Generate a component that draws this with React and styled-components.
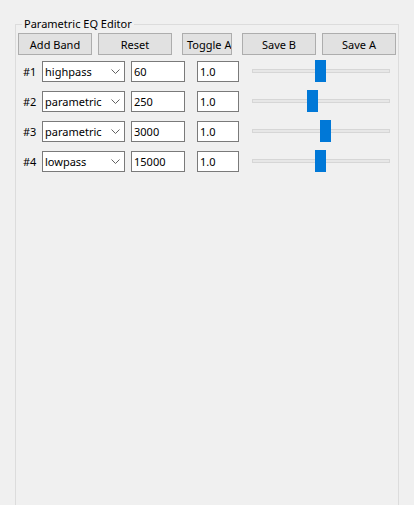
import React from 'react';
import styled, { createGlobalStyle } from 'styled-components';

const bands = [
  { id: 1, type: 'highpass', freq: '60', q: '1.0', thumb: 63 / 127 },
  { id: 2, type: 'parametric', freq: '250', q: '1.0', thumb: 55 / 127 },
  { id: 3, type: 'parametric', freq: '3000', q: '1.0', thumb: 68 / 127 },
  { id: 4, type: 'lowpass', freq: '15000', q: '1.0', thumb: 63 / 127 },
];

const TRACK_W = 138;
const THUMB_W = 11;

const App = () => {
  return (
    <>
      <GlobalStyle />
      <Page>
        <Group>
          <Legend>Parametric EQ Editor</Legend>
          <Toolbar>
            <Button $w={74}>Add Band</Button>
            <Button $w={74} $ml={6}>Reset</Button>
            <Button $w={50} $ml={10} $left>Toggle A</Button>
            <Button $w={74} $ml={10}>Save B</Button>
            <Button $w={74} $ml={6}>Save A</Button>
          </Toolbar>

          <Rows>
            {bands.map((b) => (
              <Row key={b.id}>
                <BandNo>#{b.id}</BandNo>
                <SelectWrap>
                  <Select defaultValue={b.type}>
                    <option value="highpass">highpass</option>
                    <option value="parametric">parametric</option>
                    <option value="lowpass">lowpass</option>
                  </Select>
                  <Chevron width="9" height="5" viewBox="0 0 9 5">
                    <path d="M0.5 0.5 L4.5 4.5 L8.5 0.5" fill="none" stroke="#606060" strokeWidth="1" />
                  </Chevron>
                </SelectWrap>
                <Field $w={54} defaultValue={b.freq} />
                <Field $w={42} $ml={12} defaultValue={b.q} />
                <Slider>
                  <Groove />
                  <Thumb style={{ left: Math.round(b.thumb * (TRACK_W - THUMB_W)) }} />
                </Slider>
              </Row>
            ))}
          </Rows>
        </Group>
      </Page>
    </>
  );
};

export default App;

const GlobalStyle = createGlobalStyle`
  html, body {
    margin: 0;
    padding: 0;
    background: #f0f0f0;
    overflow: hidden;
  }
  body {
    font-family: "Noto Sans", "Open Sans", sans-serif;
    font-size: 11px;
    color: #000;
  }
`;

const Page = styled.div`
  padding: 16px 0 0 15px;
  height: 505px;
  box-sizing: border-box;
  overflow: hidden;
`;

const Group = styled.fieldset`
  margin: 0;
  padding: 0;
  width: 384px;
  height: 520px;
  box-sizing: border-box;
  border: 1px solid #dcdcdc;
  border-radius: 0;
`;

const Legend = styled.legend`
  margin-left: 6px;
  padding: 0 2px;
  font-size: 11px;
  line-height: 16px;
  color: #000;
`;

const Toolbar = styled.div`
  display: flex;
  align-items: center;
  padding: 1px 0 0 2px;
`;

const Button = styled.button`
  width: ${(p) => p.$w}px;
  height: 22px;
  margin: 0 0 0 ${(p) => p.$ml || 0}px;
  padding: ${(p) => (p.$left ? '0 0 0 4px' : '0')};
  box-sizing: border-box;
  background: #e1e1e1;
  border: 1px solid #adadad;
  border-radius: 0;
  font-family: inherit;
  font-size: 11px;
  color: #000;
  text-align: ${(p) => (p.$left ? 'left' : 'center')};
  white-space: nowrap;
  overflow: hidden;
  cursor: default;
`;

const Rows = styled.div`
  display: flex;
  flex-direction: column;
  gap: 9px;
  margin-top: 6px;
  padding-left: 7px;
`;

const Row = styled.div`
  display: flex;
  align-items: center;
  height: 21px;
`;

const BandNo = styled.span`
  width: 19px;
  line-height: 21px;
`;

const SelectWrap = styled.div`
  position: relative;
  width: 83px;
  height: 21px;
`;

const Select = styled.select`
  appearance: none;
  width: 100%;
  height: 100%;
  margin: 0;
  padding: 0 0 0 2px;
  box-sizing: border-box;
  background: #fff;
  border: 1px solid #7a7a7a;
  border-radius: 0;
  font-family: inherit;
  font-size: 11px;
  color: #000;
  outline: none;
`;

const Chevron = styled.svg`
  position: absolute;
  right: 5px;
  top: 8px;
  pointer-events: none;
`;

const Field = styled.input`
  width: ${(p) => p.$w}px;
  height: 21px;
  margin: 0 0 0 ${(p) => p.$ml || 6}px;
  padding: 0 2px;
  box-sizing: border-box;
  background: #fff;
  border: 1px solid #7a7a7a;
  border-radius: 0;
  font-family: inherit;
  font-size: 11px;
  color: #000;
  outline: none;
`;

const Slider = styled.div`
  position: relative;
  width: ${TRACK_W}px;
  height: 22px;
  margin: -1px 0 0 13px;
  display: flex;
  align-items: center;
`;

const Groove = styled.div`
  width: 100%;
  height: 4px;
  box-sizing: border-box;
  background: #e7e7e7;
  border: 1px solid #d6d6d6;
`;

const Thumb = styled.div`
  position: absolute;
  top: 0;
  width: ${THUMB_W}px;
  height: 22px;
  background: #0078d7;
`;
